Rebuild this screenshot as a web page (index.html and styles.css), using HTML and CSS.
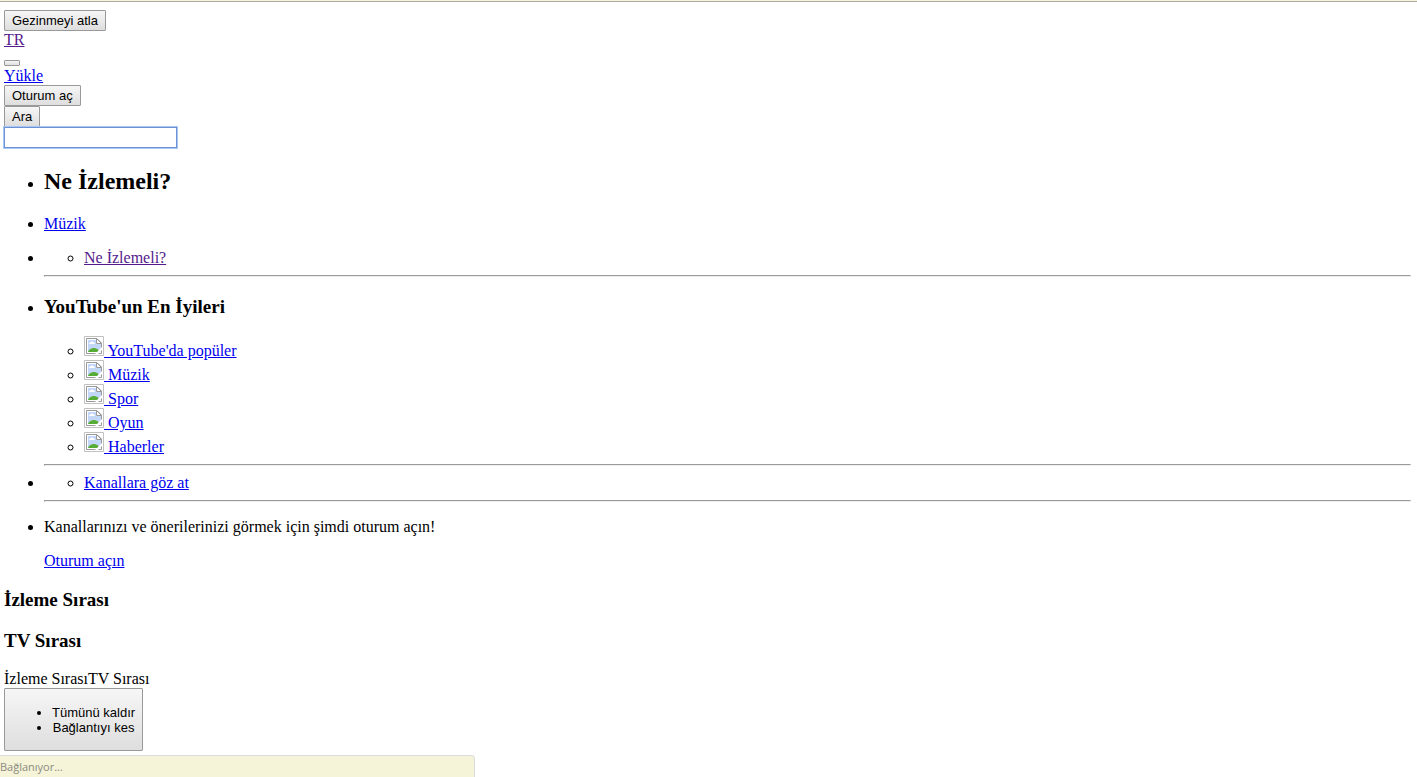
FILE: index.html
```html
<!DOCTYPE html>
<html lang="tr">
<head>
    <meta charset="utf-8">
    <title>YouTube</title>
    <link rel="stylesheet" href="styles.css">
</head>
<body>
    <svg class="defs" width="0" height="0" aria-hidden="true">
        <defs>
            <symbol id="broken" viewBox="0 0 20 20">
                <path d="M.5.5h19v19H.5z" fill="#fff" stroke="#c0c0c0"/>
                <path d="M2.500 2.500H13l4.500 4.500V17.500h-15z" fill="#fff" stroke="#999"/>
                <path d="M4 4h8v4h5v8H4z" fill="#c3d7fa"/>
                <path d="M5 8c0-1 .5-1.500 1.500-1.500C7 5 9 5 9.500 6.500c1 0 1.500.5 1.500 1.500z" fill="#fff"/>
                <path d="M4 16c1-3 3.500-4 6-4 2 0 3.500 1 4.500 2v2z" fill="#56ad35"/>
                <path d="M12.500 2.500v5h5z" fill="#fff" stroke="#999"/>
                <path d="M10.500 18.500l8-8v3l-5 5z" fill="#fff"/>
            </symbol>
        </defs>
    </svg>

    <div class="page">
        <div><button type="button">Gezinmeyi atla</button></div>
        <div><a class="visited" href="#">TR</a></div>
        <div class="guide-toggle"><button class="empty" type="button" aria-label="Kılavuz"></button></div>
        <div><a href="#">Yükle</a></div>
        <div><button type="button">Oturum aç</button></div>
        <div><button type="button">Ara</button></div>
        <div><input class="search" type="text" aria-label="Ara"></div>

        <ul class="guide">
            <li><h2>Ne İzlemeli?</h2></li>
            <li class="music"><a href="#">Müzik</a></li>
            <li>
                <ul>
                    <li><a class="visited" href="#">Ne İzlemeli?</a></li>
                </ul>
                <hr>
            </li>
            <li>
                <h3>YouTube'un En İyileri</h3>
                <ul>
                    <li><a href="#"><svg class="thumb"><use href="#broken"/></svg> YouTube'da popüler</a></li>
                    <li><a href="#"><svg class="thumb"><use href="#broken"/></svg> Müzik</a></li>
                    <li><a href="#"><svg class="thumb"><use href="#broken"/></svg> Spor</a></li>
                    <li><a href="#"><svg class="thumb"><use href="#broken"/></svg> Oyun</a></li>
                    <li><a href="#"><svg class="thumb"><use href="#broken"/></svg> Haberler</a></li>
                </ul>
                <hr>
            </li>
            <li>
                <ul>
                    <li><a href="#">Kanallara göz at</a></li>
                </ul>
                <hr>
            </li>
            <li>
                <p>Kanallarınızı ve önerilerinizi görmek için şimdi oturum açın!</p>
                <a href="#">Oturum açın</a>
            </li>
        </ul>

        <h3>İzleme Sırası</h3>
        <h3>TV Sırası</h3>
        <div>İzleme SırasıTV Sırası</div>
        <button class="queue-menu" type="button">
            <ul>
                <li>Tümünü kaldır</li>
                <li>Bağlantıyı kes</li>
            </ul>
        </button>
    </div>

    <div class="status">Bağlanıyor...</div>
</body>
</html>
```

FILE: styles.css
```css
body {
    margin: 0;
    background: #fff;
    color: #000;
    font: 16px/18px "Liberation Serif", "Times New Roman", serif;
    border-top: 1px solid #f5f3d8;
    overflow: hidden;
}

.defs {
    position: absolute;
}

.page {
    padding: 8px 6px 0 4px;
    border-top: 1px solid #a9a9a0;
}

a {
    color: #0000ee;
}

a.visited {
    color: #551a8b;
}

/* form controls */
button {
    display: block;
    box-sizing: border-box;
    margin: 0;
    padding: 2px 7px;
    border: 1px solid #999;
    border-radius: 1px;
    background: linear-gradient(#f6f6f6, #dedede);
    color: #000;
    font: 13px/15px "Liberation Sans", Arial, sans-serif;
    min-height: 21px;
}

.empty {
    width: 16px;
    height: 6px;
    min-height: 0;
}

.guide-toggle {
    padding: 11px 0 1px;
}

.search {
    display: block;
    box-sizing: border-box;
    width: 173px;
    height: 21px;
    margin: 0;
    padding: 1px 2px;
    border: 1px solid #6a92d4;
    outline: 1px solid #a9c6f5;
    font: 13px/15px "Liberation Sans", Arial, sans-serif;
}

/* guide */
ul {
    margin: 0;
    padding-left: 40px;
}

.guide {
    margin: 20px 0 19px;
}

h2 {
    margin: 0 0 20px;
    font-size: 24px;
    line-height: 27px;
}

h3 {
    margin: 19px 0 18px;
    font-size: 19px;
    line-height: 22px;
}

.music {
    margin-bottom: 16px;
}

hr {
    margin: 8px 0;
    border: 1px inset #eee;
}

p {
    margin: 16px 0;
}

.thumb {
    width: 20px;
    height: 20px;
}

.queue-menu {
    padding: 16px 7px 15px;
}

.queue-menu ul {
    list-style: disc;
}

/* browser status bubble */
.status {
    position: fixed;
    left: 0;
    bottom: 0;
    box-sizing: border-box;
    width: 475px;
    height: 22px;
    border: 1px solid #dcdcdc;
    border-width: 1px 1px 0 0;
    border-radius: 0 4px 0 0;
    background: #f5f3d8;
    color: #8c8b80;
    font: 11px/22px "Open Sans", "Noto Sans", sans-serif;
}
```
